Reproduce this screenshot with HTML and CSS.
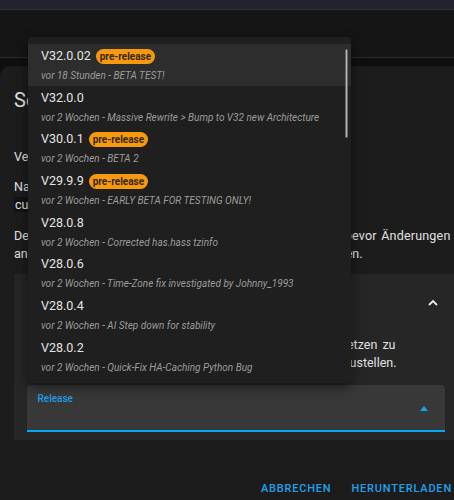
FILE: index.html
```html
<!DOCTYPE html>
<html lang="de">
<head>
    <meta charset="UTF-8">
    <meta name="viewport" content="width=device-width, initial-scale=1.0">
    <title>Solarman herunterladen</title>
    <link rel="stylesheet" href="styles.css">
</head>
<body>
    <header class="topbar"></header>
    <div class="backdrop"></div>
    <div class="strip"></div>

    <section class="dialog">
        <h2 class="dialog-title">Solarman Integration</h2>
        <p class="text first">Version V32.0.02 wird heruntergeladen.</p>
        <p class="text">Nach dem Download befindet sich die Integration unter<br><code>custom_components/solarman</code></p>
        <p class="text">
            <span class="jline restart-1">Denke daran, dass du Home Assistant neu starten musst, <span class="loose">bevor Änderungen</span></span>
            <span class="jline restart-2">an Integrationen (custom_components) wirksam werden.</span>
        </p>

        <div class="panel">
            <div class="panel-head">
                <span>Version auswählen</span>
                <svg class="chevron" width="10" height="7" viewBox="0 0 10 7">
                    <polyline points="1,6 5,2 9,6" fill="none" stroke="#ececec" stroke-width="1.8"/>
                </svg>
            </div>
            <p class="panel-text">
                <span class="jline pick-1">Wähle eine Version aus, um eine frühere Version einsetzen zu</span>
                <span class="jline pick-2">können oder einen älteren, stabilen Stand wiederherzustellen.</span>
            </p>
            <div class="select">
                <span class="select-label">Release</span>
                <span class="select-arrow"></span>
            </div>
        </div>

        <div class="actions">
            <button class="btn">Abbrechen</button>
            <button class="btn">Herunterladen</button>
        </div>
    </section>

    <!-- open release dropdown -->
    <div class="menu">
        <div class="menu-item active">
            <div class="item-title">V32.0.02 <span class="badge">pre-release</span></div>
            <div class="item-sub">vor 18 Stunden - BETA TEST!</div>
        </div>
        <div class="menu-item">
            <div class="item-title">V32.0.0</div>
            <div class="item-sub">vor 2 Wochen - Massive Rewrite &gt; Bump to V32 new Architecture</div>
        </div>
        <div class="menu-item">
            <div class="item-title">V30.0.1 <span class="badge">pre-release</span></div>
            <div class="item-sub">vor 2 Wochen - BETA 2</div>
        </div>
        <div class="menu-item">
            <div class="item-title">V29.9.9 <span class="badge">pre-release</span></div>
            <div class="item-sub">vor 2 Wochen - EARLY BETA FOR TESTING ONLY!</div>
        </div>
        <div class="menu-item">
            <div class="item-title">V28.0.8</div>
            <div class="item-sub">vor 2 Wochen - Corrected has.hass tzinfo</div>
        </div>
        <div class="menu-item">
            <div class="item-title">V28.0.6</div>
            <div class="item-sub">vor 2 Wochen - Time-Zone fix investigated by Johnny_1993</div>
        </div>
        <div class="menu-item">
            <div class="item-title">V28.0.4</div>
            <div class="item-sub">vor 2 Wochen - AI Step down for stability</div>
        </div>
        <div class="menu-item">
            <div class="item-title">V28.0.2</div>
            <div class="item-sub">vor 2 Wochen - Quick-Fix HA-Caching Python Bug</div>
        </div>
        <div class="menu-scroll"></div>
    </div>
</body>
</html>
```

FILE: styles.css
```css
/* General styles */
* {
    box-sizing: border-box;
    margin: 0;
    padding: 0;
}

body {
    width: 454px;
    height: 500px;
    overflow: hidden;
    position: relative;
    background: #0f0f0f;
    font-family: Roboto, 'Liberation Sans', sans-serif;
    color: #e1e1e1;
}

/* page behind the dialog */
.topbar {
    height: 10px;
    background: #23232d;
    border-bottom: 1px solid #30303a;
}

.backdrop {
    height: 47px;
    background: #151515;
}

.strip {
    height: 9px;
    border-top: 1px solid #292929;
    background: #0f0f0f;
}

/* dialog */
.dialog {
    width: 472px;
    padding: 22px 14px 20px;
    background: #1c1c1c;
    border-radius: 10px 10px 0 0;
}

.dialog-title {
    font-size: 20px;
    line-height: 24px;
    font-weight: 400;
    white-space: nowrap;
}

.text {
    font-size: 12.5px;
    line-height: 18px;
    margin-top: 12px;
    white-space: nowrap;
}

.text.first {
    margin-top: 36px;
}

.text + .text + .text {
    margin-top: 13px;
}

/* lines stretched to a fixed measure */
.jline {
    display: block;
    white-space: normal;
    text-align: justify;
    text-align-last: justify;
}

.restart-1 { width: 436.5px; }
.restart-2 { width: 348.5px; }
.pick-1 { width: 357.5px; }
.pick-2 { width: 358.5px; }

.loose {
    letter-spacing: 0.2px;
}

code {
    font-family: inherit;
    background: #131313;
    padding: 0 1px;
}

.panel {
    margin-top: 11px;
    background: #262626;
    padding-bottom: 8px;
}

.panel-head {
    height: 56px;
    display: flex;
    align-items: center;
    justify-content: space-between;
    padding: 0 20px 0 24px;
    font-size: 13px;
}

.panel-text {
    margin: 6px 13px 0 24px;
    font-size: 12.5px;
    line-height: 18px;
}

.select {
    margin: 13px 13px 0;
    height: 47px;
    background: #383838;
    border-radius: 4px 4px 0 0;
    border-bottom: 2px solid #03a9f4;
    display: flex;
    justify-content: space-between;
    padding: 9px 17px 0 10.5px;
}

.select-label {
    font-size: 10px;
    line-height: 10px;
    font-weight: 500;
    color: #1e9ee8;
}

.select-arrow {
    margin-top: 12px;
    width: 0;
    height: 0;
    border-left: 4px solid transparent;
    border-right: 4px solid transparent;
    border-bottom: 5px solid #1aa0ea;
}

.actions {
    margin-top: 30px;
    display: flex;
    justify-content: flex-end;
    gap: 8px;
}

.btn {
    height: 36px;
    padding: 0 6px;
    border: none;
    background: none;
    color: #1ea3ec;
    font-family: Roboto, sans-serif;
    font-size: 11px;
    font-weight: 500;
    letter-spacing: 0.8px;
    text-transform: uppercase;
}

/* dropdown menu */
.menu {
    position: absolute;
    top: 37px;
    left: 28px;
    width: 323px;
    height: 346px;
    padding-top: 7px;
    background: #1f1f1f;
    border-radius: 4px;
    box-shadow: 0 4px 12px rgba(0, 0, 0, 0.5);
    overflow: hidden;
}

.menu-item {
    height: 41.7px;
    padding: 4px 13px 0;
}

.menu-item.active {
    background: #2d2d2d;
}

.item-title {
    display: flex;
    align-items: center;
    gap: 5px;
    font-size: 12.5px;
    line-height: 16px;
    color: #e4e4e4;
}

.item-sub {
    margin-top: 5px;
    font-size: 10px;
    line-height: 14px;
    font-style: italic;
    color: #9c9c9c;
    white-space: nowrap;
}

.badge {
    height: 15px;
    line-height: 15px;
    padding: 0 4px;
    border-radius: 8px;
    background: #f7990f;
    color: #35270e;
    font-size: 10px;
    font-weight: 700;
}

.menu-scroll {
    position: absolute;
    top: 12px;
    right: 3px;
    width: 3px;
    height: 89px;
    border-radius: 2px;
    background: #b4b4b4;
    border: 0.5px solid #6a6a6a;
}
```
